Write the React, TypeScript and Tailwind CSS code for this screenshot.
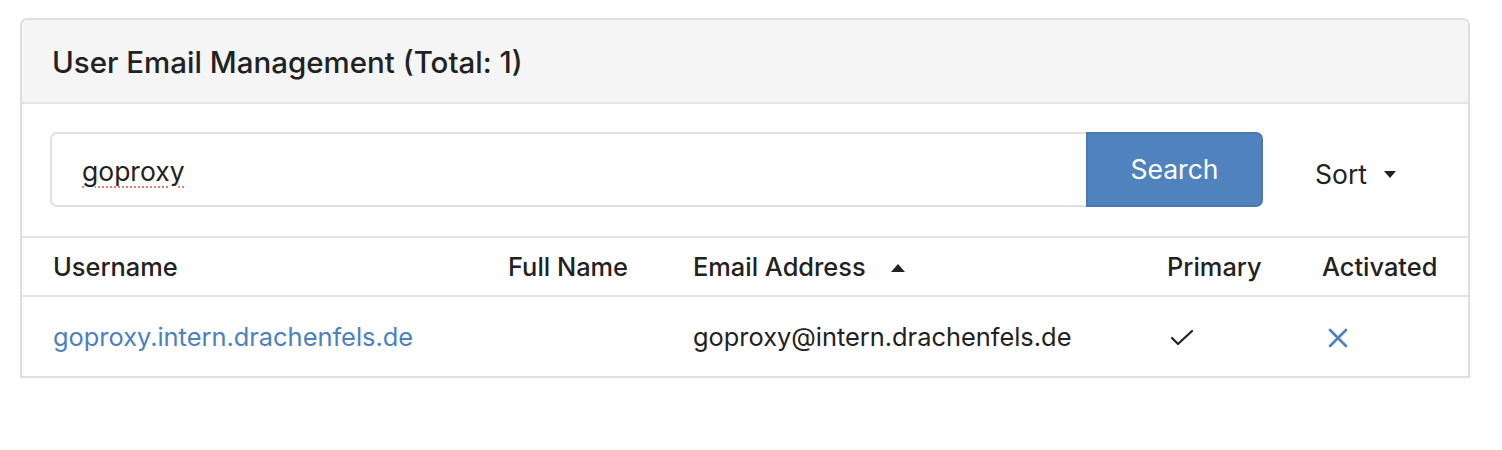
import React from "react";

const font = { fontFamily: "Inter, 'Noto Sans', sans-serif" };

function CaretDown() {
  return (
    <svg width="12" height="7" viewBox="0 0 12 7" className="fill-[#222]">
      <path d="M0 0h12L6 7z" />
    </svg>
  );
}

function CaretUp() {
  return (
    <svg width="14" height="8" viewBox="0 0 14 8" className="fill-[#222]">
      <path d="M0 8h14L7 0z" />
    </svg>
  );
}

export default function App() {
  return (
    <div className="bg-white w-[1502px] h-[450px] pt-[18px] pl-[20px] text-[#222]" style={font}>
      <div className="w-[1450px] border-2 border-[#dedede] rounded-t-[7px]">
        <div className="h-[84px] bg-[#f5f5f5] border-b-2 border-[#e3e3e3] rounded-t-[5px] flex items-center pl-[30px] pt-[3px]">
          <h2 className="text-[29.5px] font-medium">User Email Management (Total: 1)</h2>
        </div>

        <div className="flex items-center pt-[28px] pb-[29px] pl-[28px] pr-[30px] border-b-2 border-[#e3e3e3]">
          <div className="flex w-[1213px] h-[75px]">
            <input
              defaultValue="goproxy"
              spellCheck={false}
              className="flex-1 min-w-0 border-2 border-r-0 border-[#e0e0e0] rounded-l-[7px] pl-[30px] pt-[4px] text-[26.5px] outline-none underline decoration-dotted decoration-[#f0796f] decoration-2 underline-offset-[6px]"
            />
            <button className="w-[177px] bg-[#5083be] border-2 border-[#4a79b2] rounded-r-[7px] text-white text-[26.5px]">
              Search
            </button>
          </div>
          <div className="ml-[52px] flex items-center gap-[17px] text-[26.5px] pt-[10px]">
            Sort
            <CaretDown />
          </div>
        </div>

        <div className="grid grid-cols-[455px_185px_474px_155px_1fr] text-[25.4px]">
          <div className="h-[59px] flex items-center pl-[31px] pt-[2px] font-medium border-b-2 border-[#e3e3e3]">Username</div>
          <div className="h-[59px] flex items-center pl-[31px] pt-[2px] font-medium border-b-2 border-[#e3e3e3]">Full Name</div>
          <div className="h-[59px] flex items-center pl-[31px] pt-[2px] font-medium border-b-2 border-[#e3e3e3] gap-[25px]">
            Email Address
            <CaretUp />
          </div>
          <div className="h-[59px] flex items-center pl-[31px] pt-[2px] font-medium border-b-2 border-[#e3e3e3]">Primary</div>
          <div className="h-[59px] flex items-center pl-[31px] pt-[2px] font-medium border-b-2 border-[#e3e3e3]">Activated</div>

          <div className="h-[79px] flex items-center pl-[31px] pt-[2px]">
            <a href="#" className="text-[#4c80c1]">goproxy.intern.drachenfels.de</a>
          </div>
          <div className="h-[79px]" />
          <div className="h-[79px] flex items-center pl-[31px] pt-[2px]">goproxy@intern.drachenfels.de</div>
          <div className="h-[79px] flex items-center pl-[34px] pt-[2px]">
            <svg width="24" height="18" viewBox="0 0 24 18" fill="none" stroke="#222" strokeWidth="2.2" strokeLinecap="round" strokeLinejoin="round">
              <path d="M2 9l6 6L22 2" />
            </svg>
          </div>
          <div className="h-[79px] flex items-center pl-[37px] pt-[2px]">
            <svg width="20" height="20" viewBox="0 0 20 20" fill="none" stroke="#4c80c1" strokeWidth="2.6" strokeLinecap="round">
              <path d="M2 2l16 16M18 2L2 18" />
            </svg>
          </div>
        </div>
      </div>
    </div>
  );
}
